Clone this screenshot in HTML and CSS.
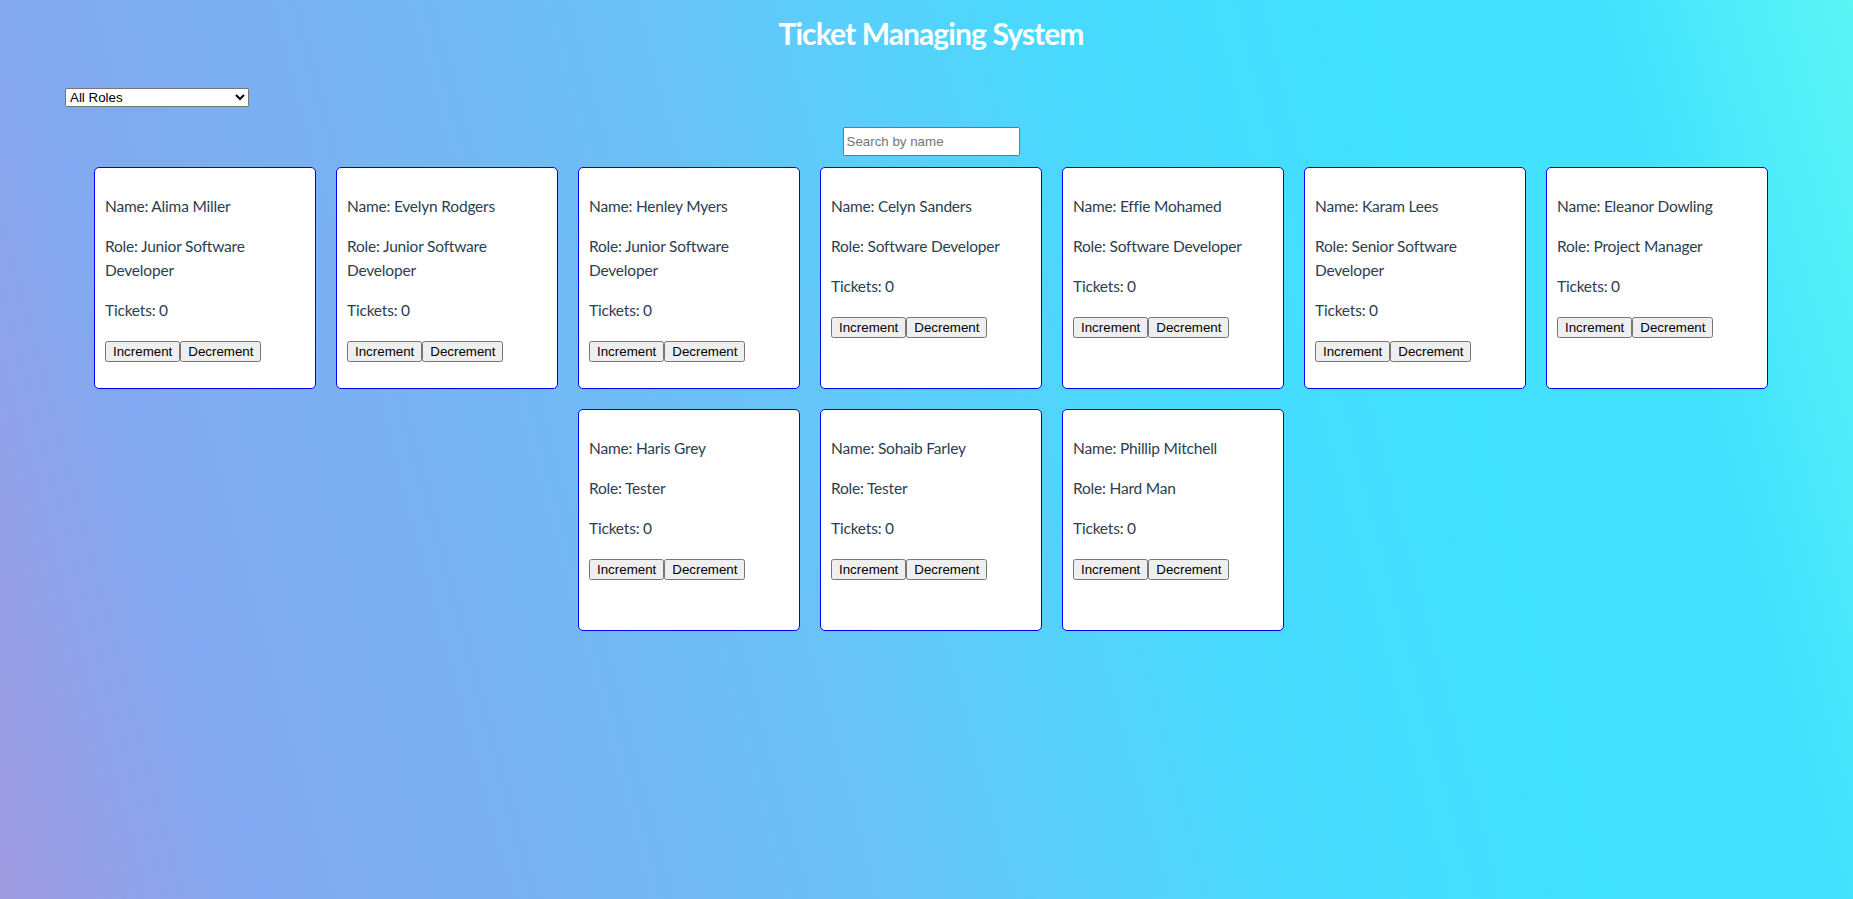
FILE: index.html
```html
<!DOCTYPE html>
<html lang="en">
<head>
<meta charset="utf-8">
<title>Ticket Managing System</title>
<link rel="stylesheet" href="styles.css">
</head>
<body>
<div class="app">
  <h1 class="title">Ticket Managing System</h1>
  <div class="filter-row">
    <select class="role-select">
      <option>All Roles</option>
      <option>Junior Software Developer</option>
      <option>Software Developer</option>
      <option>Senior Software Developer</option>
      <option>Project Manager</option>
      <option>Tester</option>
      <option>Hard Man</option>
    </select>
  </div>
  <div class="search-row">
    <input class="search" type="text" placeholder="Search by name">
  </div>
  <div class="cards">
    <div class="card">
      <p>Name: Alima Miller</p>
      <p>Role: Junior Software Developer</p>
      <p>Tickets: 0</p>
      <div class="actions"><button>Increment</button><button>Decrement</button></div>
    </div>
    <div class="card">
      <p>Name: Evelyn Rodgers</p>
      <p>Role: Junior Software Developer</p>
      <p>Tickets: 0</p>
      <div class="actions"><button>Increment</button><button>Decrement</button></div>
    </div>
    <div class="card">
      <p>Name: Henley Myers</p>
      <p>Role: Junior Software Developer</p>
      <p>Tickets: 0</p>
      <div class="actions"><button>Increment</button><button>Decrement</button></div>
    </div>
    <div class="card">
      <p>Name: Celyn Sanders</p>
      <p>Role: Software Developer</p>
      <p>Tickets: 0</p>
      <div class="actions"><button>Increment</button><button>Decrement</button></div>
    </div>
    <div class="card">
      <p>Name: Effie Mohamed</p>
      <p>Role: Software Developer</p>
      <p>Tickets: 0</p>
      <div class="actions"><button>Increment</button><button>Decrement</button></div>
    </div>
    <div class="card">
      <p>Name: Karam Lees</p>
      <p>Role: Senior Software Developer</p>
      <p>Tickets: 0</p>
      <div class="actions"><button>Increment</button><button>Decrement</button></div>
    </div>
    <div class="card">
      <p>Name: Eleanor Dowling</p>
      <p>Role: Project Manager</p>
      <p>Tickets: 0</p>
      <div class="actions"><button>Increment</button><button>Decrement</button></div>
    </div>
    <div class="card">
      <p>Name: Haris Grey</p>
      <p>Role: Tester</p>
      <p>Tickets: 0</p>
      <div class="actions"><button>Increment</button><button>Decrement</button></div>
    </div>
    <div class="card">
      <p>Name: Sohaib Farley</p>
      <p>Role: Tester</p>
      <p>Tickets: 0</p>
      <div class="actions"><button>Increment</button><button>Decrement</button></div>
    </div>
    <div class="card">
      <p>Name: Phillip Mitchell</p>
      <p>Role: Hard Man</p>
      <p>Tickets: 0</p>
      <div class="actions"><button>Increment</button><button>Decrement</button></div>
    </div>
  </div>
</div>
</body>
</html>
```
FILE: styles.css
```css
html, body {
  margin: 0;
  padding: 0;
}

body {
  min-height: 100vh;
  font-family: Lato, "Open Sans", sans-serif;
  color: #2c3e50;
  background: linear-gradient(75deg,
    #9f9ae0 0%,
    #82a8f0 12%,
    #7ab2f3 25%,
    #68c2f8 43%,
    #5ccdfb 50%,
    #48dafe 62%,
    #40e0ff 76%,
    #42e2fe 88%,
    #5af5f5 100%);
}

.app {
  padding-left: 9px;
}

.title {
  margin: 13px 0 0;
  font-size: 30px;
  line-height: 40px;
  font-weight: 700;
  color: #ffffff;
  text-align: center;
  letter-spacing: -0.9px;
}

.filter-row {
  margin-top: 35px;
  padding-left: 56px;
  display: flex;
}

.role-select {
  width: 184px;
  height: 19px;
  font-family: "Liberation Sans", Arial, sans-serif;
  font-size: 13.33px;
}

.search-row {
  margin-top: 20px;
  display: flex;
  justify-content: center;
}

.search {
  box-sizing: border-box;
  width: 177px;
  height: 29px;
  padding: 5px 2px;
  font-family: "Liberation Sans", Arial, sans-serif;
  font-size: 13.33px;
}

.cards {
  margin-top: 1px;
  display: flex;
  flex-wrap: wrap;
  justify-content: center;
}

.card {
  width: 200px;
  height: 200px;
  padding: 10px;
  margin: 10px;
  background: #ffffff;
  border: 1px solid #0000ff;
  border-radius: 5px;
}

.card p {
  margin: 16px 0;
  font-size: 15.5px;
  line-height: 24px;
  letter-spacing: -0.2px;
}

.actions {
  display: flex;
  padding-top: 3px;
}

.actions button {
  font-family: "Liberation Sans", Arial, sans-serif;
  font-size: 13.33px;
}
```
